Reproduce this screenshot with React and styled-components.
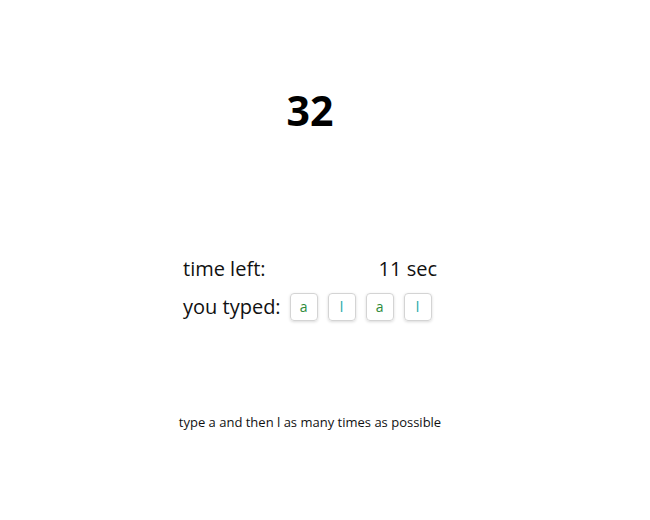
import React from "react";
import styled, { createGlobalStyle } from "styled-components";

const Global = createGlobalStyle`
  body { margin: 8px; font-family: "Open Sans", sans-serif; color: #111; background: #fff; }
`;

const Page = styled.div`
  width: 604px;
  display: flex;
  flex-direction: column;
  align-items: center;
`;

const Score = styled.h1`
  margin: 72px 0 0;
  font-size: 41px;
  font-weight: 700;
  line-height: 60px;
  color: #000;
`;

const Table = styled.div`
  margin-top: 115px;
  width: 254px;
  display: grid;
  grid-template-columns: auto 1fr;
  row-gap: 10px;
  font-size: 20px;
  line-height: 28px;
`;

const Label = styled.div`
  padding-right: 9px;
`;

const Value = styled.div`
  display: flex;
  justify-content: ${(p) => (p.$right ? "flex-end" : "flex-start")};
  align-items: center;
  gap: 10px;
`;

const Key = styled.span`
  width: 26px;
  height: 26px;
  border: 1px solid #d4d4d4;
  border-radius: 4px;
  box-shadow: 0 1px 3px rgba(0, 0, 0, 0.15);
  display: flex;
  align-items: center;
  justify-content: center;
  font-size: 14px;
  color: ${(p) => (p.$k === "a" ? "#2e8b3a" : "#1aa6a6")};
`;

const Hint = styled.p`
  margin: 92px 0 0;
  font-size: 13px;
`;

export default function App() {
  const typed = ["a", "l", "a", "l"];
  return (
    <>
      <Global />
      <Page>
        <Score>32</Score>
        <Table>
          <Label>time left:</Label>
          <Value $right>11 sec</Value>
          <Label>you typed:</Label>
          <Value>
            {typed.map((k, i) => (
              <Key key={i} $k={k}>{k}</Key>
            ))}
          </Value>
        </Table>
        <Hint>type a and then l as many times as possible</Hint>
      </Page>
    </>
  );
}
